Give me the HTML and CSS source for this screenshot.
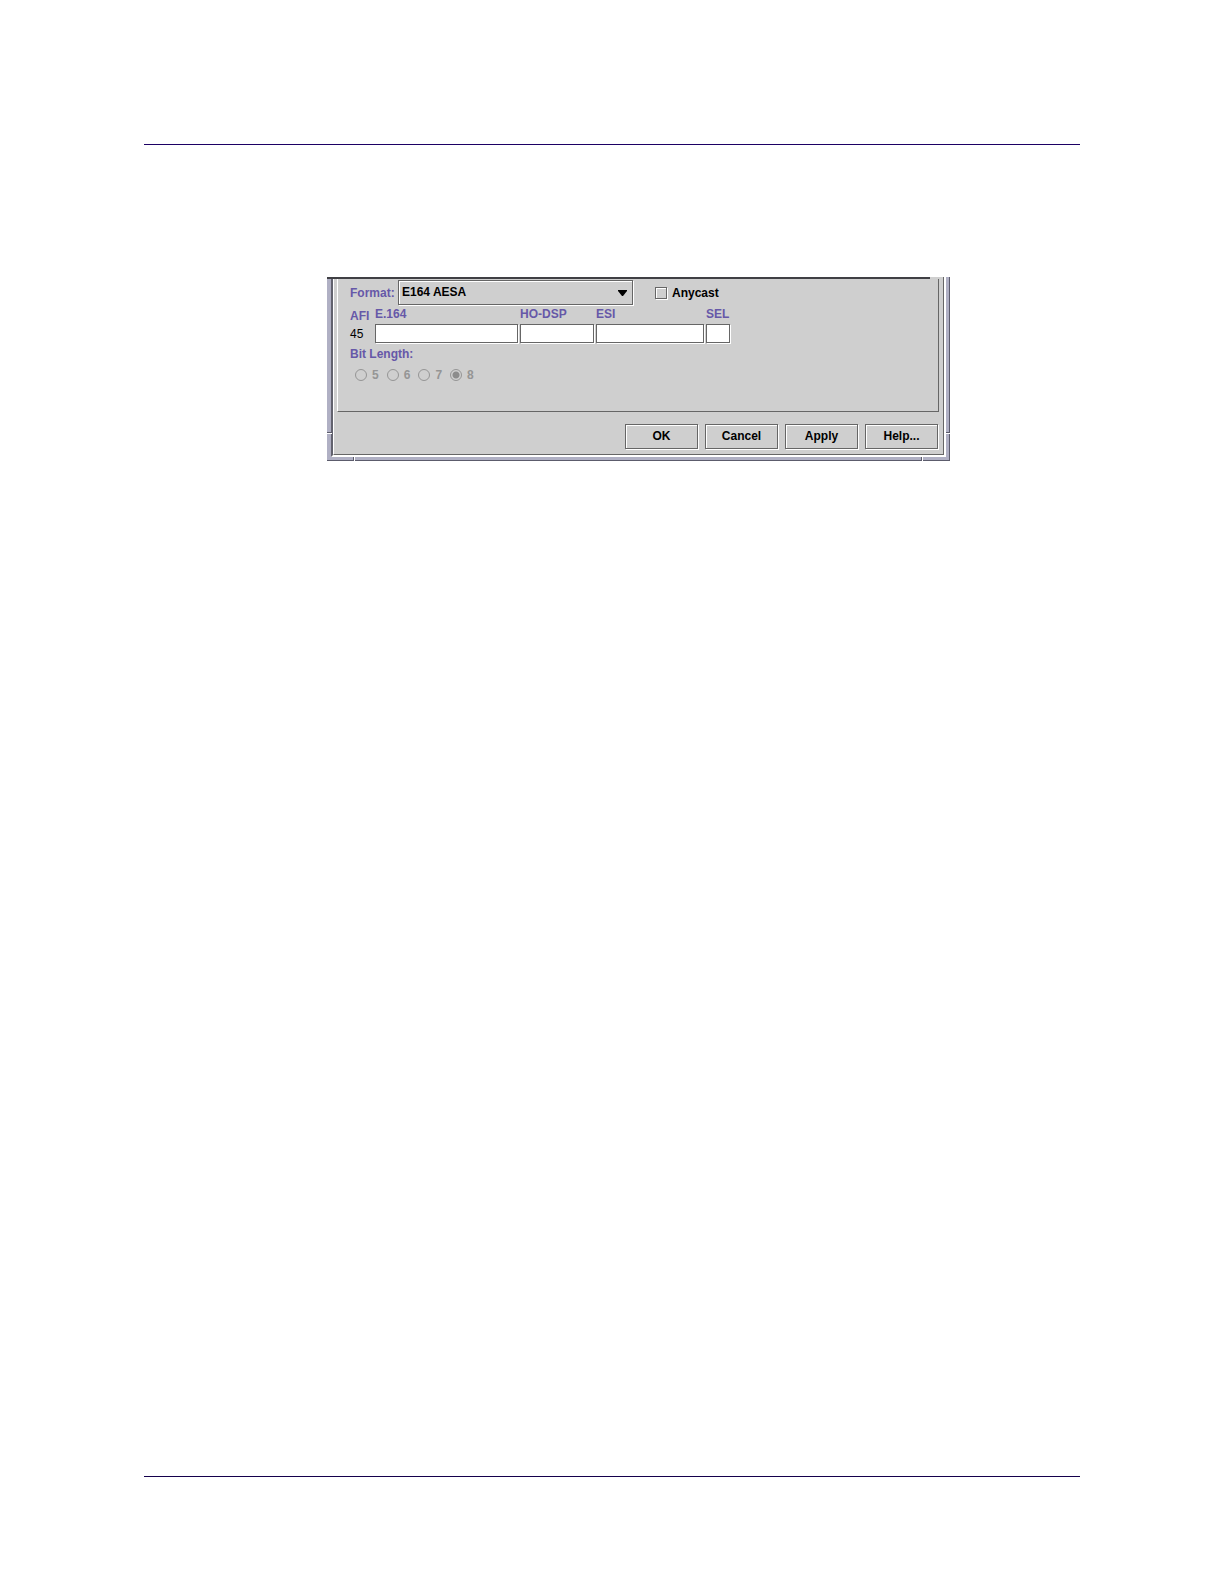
FILE: index.html
```html
<!DOCTYPE html>
<html lang="en">
<head>
<meta charset="UTF-8">
<meta name="viewport" content="width=device-width, initial-scale=1.0">
<title>E164 AESA</title>
<link rel="stylesheet" href="styles.css">
</head>
<body>
<main class="page">
  <form class="window">
    <div class="window-edge">
      <div class="window-body">
        <div class="top-line"></div>

        <div class="panel">
          <div class="format-row">
            <label class="caption format-label" for="format">Format:</label>
            <div class="format-select">
              <select id="format">
                <option>E164 AESA</option>
              </select>
              <svg class="arrow" width="9" height="6" viewBox="0 0 9 6"><path d="M0 0h9v1L5 6H4L0 1z"/></svg>
            </div>
            <label class="check"><input type="checkbox">Anycast</label>
          </div>

          <div class="address">
            <div class="afi">
              <span class="caption">AFI</span>
              <span>45</span>
            </div>
            <div class="field field-e164">
              <label class="caption" for="e164">E.164</label>
              <input type="text" id="e164">
            </div>
            <div class="field field-dsp">
              <label class="caption" for="dsp">HO-DSP</label>
              <input type="text" id="dsp">
            </div>
            <div class="field field-esi">
              <label class="caption" for="esi">ESI</label>
              <input type="text" id="esi">
            </div>
            <div class="field field-sel">
              <label class="caption" for="sel">SEL</label>
              <input type="text" id="sel">
            </div>
          </div>

          <fieldset class="bits" disabled>
            <legend class="caption">Bit Length:</legend>
            <div class="radios">
              <label><input type="radio" name="bits">5</label>
              <label><input type="radio" name="bits">6</label>
              <label><input type="radio" name="bits">7</label>
              <label><input type="radio" name="bits" checked>8</label>
            </div>
          </fieldset>
        </div>

        <div class="buttons">
          <button type="button">OK</button>
          <button type="button">Cancel</button>
          <button type="button">Apply</button>
          <button type="button">Help...</button>
        </div>
      </div>
    </div>

    <!-- resize corner marks -->
    <i class="notch notch-left"></i>
    <i class="notch notch-right"></i>
    <i class="notch notch-bottom-left"></i>
    <i class="notch notch-bottom-right"></i>
  </form>
</main>
</body>
</html>
```

FILE: styles.css
```css
* {
  box-sizing: border-box;
}

body {
  margin: 0;
  background: #fff;
  color: #000;
  font-family: "Liberation Sans", Arial, sans-serif;
  font-size: 12px;
  line-height: 16px;
}

.page {
  min-height: calc(100vh - 251px);
  margin: 144px 142px 107px 144px;
  padding: 132px 130px 40px 183px;
  border-top: 1px solid #1c0064;
  border-bottom: 1px solid #14004c;
}

/* window frame */
.window {
  position: relative;
  padding: 0 3px 3px 4px;
  background: #b0b0c4;
  border-right: 1px solid #5c5c6c;
  border-bottom: 1px solid #5c5c6c;
}

.window-edge {
  border: solid #fff;
  border-width: 0 2px 2px 2px;
  border-left-color: #62626e;
}

.window-body {
  background: #cfcfcf;
  border-left: 1px solid #fff;
  border-right: 1px solid #666;
  border-bottom: 1px solid #666;
}

.top-line {
  height: 2px;
  margin-left: -7px;
  margin-right: 13px;
  background: #404044;
}

.panel {
  margin: 0 4px 0 3px;
  padding: 1px 12px 28px;
  border-left: 1px solid #fff;
  border-right: 1px solid #666;
  border-bottom: 1px solid #666;
}

.caption {
  color: #6658a8;
  font-weight: bold;
}

.format-row {
  display: flex;
  align-items: center;
}

.format-label {
  width: 48px;
}

.format-select {
  position: relative;
  width: 235px;
}

select {
  display: block;
  width: 100%;
  height: 25px;
  padding: 0 20px 2px 3px;
  border: 1px solid #666;
  border-radius: 0;
  background: #cfcfcf;
  color: #000;
  font: bold 12px "Liberation Sans", Arial, sans-serif;
  box-shadow: 1px 1px 0 #fff, inset 1px 1px 0 #fff;
  appearance: none;
}

.arrow {
  position: absolute;
  top: 10px;
  right: 6px;
  pointer-events: none;
}

.check {
  display: flex;
  align-items: center;
  gap: 5px;
  margin-left: 22px;
  font-weight: bold;
}

.check input {
  width: 12px;
  height: 12px;
  margin: 0;
  border: 1px solid #666;
  box-shadow: 1px 1px 0 #fff, inset 1px 1px 0 #fff;
  appearance: none;
}

.check input:checked {
  background: #666;
}

.address {
  display: flex;
  gap: 2px;
  padding-top: 1px;
}

.afi {
  width: 23px;
  padding-top: 2px;
}

.afi span {
  display: block;
  margin-bottom: 2px;
}

.field label {
  display: block;
  margin-bottom: 2px;
}

.field input {
  display: block;
  width: 100%;
  height: 19px;
  padding: 0 3px;
  border: 1px solid #666;
  background: #fff;
  font: 12px "Liberation Sans", Arial, sans-serif;
  box-shadow: 1px 1px 0 #fff;
}

.field-e164 {
  width: 143px;
}

.field-dsp {
  width: 74px;
}

.field-esi {
  width: 108px;
}

.field-sel {
  width: 24px;
}

.bits {
  margin: 0;
  padding: 5px 0 0;
  border: 0;
}

.bits legend {
  padding: 2px 0 0;
}

.radios {
  display: flex;
  gap: 8px;
  padding-left: 5px;
}

.radios label {
  display: flex;
  align-items: center;
  gap: 5px;
  color: #959595;
  font-weight: bold;
}

.radios input {
  width: 12px;
  height: 12px;
  margin: 0;
  border: 1px solid #959595;
  border-radius: 50%;
  appearance: none;
}

.radios input:checked {
  background: radial-gradient(circle, #8c8c8c 3px, transparent 4px);
}

.buttons {
  display: flex;
  justify-content: flex-end;
  gap: 7px;
  padding: 12px 5px 5px;
}

button {
  width: 73px;
  height: 25px;
  padding: 0 0 2px;
  border: 1px solid #666;
  background: #cfcfcf;
  color: #000;
  font: bold 12px "Liberation Sans", Arial, sans-serif;
  box-shadow: 1px 1px 0 #fff, inset 1px 1px 0 #fff;
}

/* notches lie over the frame edge */
.notch {
  position: absolute;
}

.notch-left,
.notch-right {
  bottom: 26px;
  height: 2px;
  border-top: 1px solid #5c5c6c;
  border-bottom: 1px solid #fff;
}

.notch-left {
  left: 0;
  width: 5px;
}

.notch-right {
  right: -1px;
  width: 4px;
}

.notch-bottom-left,
.notch-bottom-right {
  bottom: -1px;
  width: 2px;
  height: 4px;
  border-left: 1px solid #5c5c6c;
  border-right: 1px solid #fff;
}

.notch-bottom-left {
  left: 26px;
}

.notch-bottom-right {
  right: 26px;
}
```
